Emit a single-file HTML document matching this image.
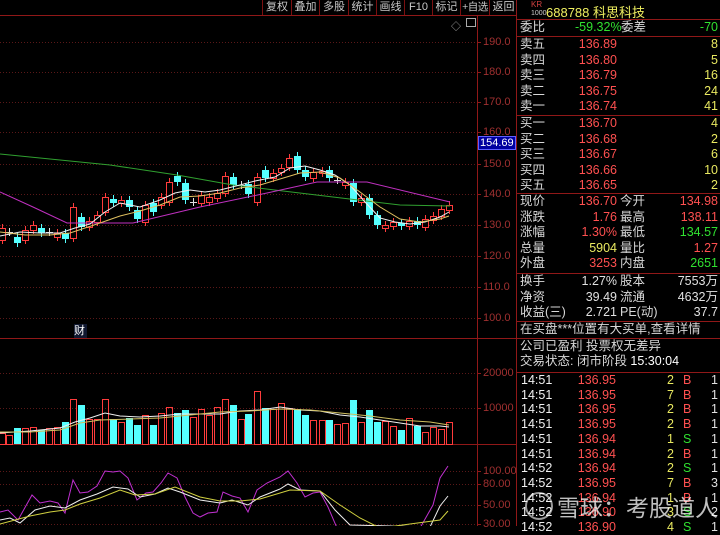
<!DOCTYPE html>
<html><head><meta charset="utf-8"><style>
*{margin:0;padding:0;box-sizing:border-box}
body{width:720px;height:526px;background:#000;overflow:hidden;position:relative;font-family:"Liberation Sans","Noto Sans CJK SC",sans-serif;color:#c8c8c8}
.a{position:absolute;white-space:nowrap}
.tb{position:absolute;top:0;height:15px;font-size:11px;line-height:14px;color:#c8c8c8;text-align:center;border-left:1px solid #7a1010;white-space:nowrap;overflow:hidden}
.ax{position:absolute;left:483px;font-size:11px;color:#a03030;line-height:12px}
.r{position:absolute;font-size:12.5px;line-height:15px;white-space:nowrap}
.l{left:520px;color:#d8d8d8}
.red{color:#ff5050}.grn{color:#30e030}.yel{color:#e8e860}.wh{color:#e0e0e0}
.sep{position:absolute;left:517px;width:203px;height:1px;background:#901818}
</style></head><body>
<svg id="c" width="720" height="526" style="position:absolute;left:0;top:0"></svg>

<div class="tb" style="left:262px;width:29px">复权</div>
<div class="tb" style="left:291px;width:28px">叠加</div>
<div class="tb" style="left:319px;width:29px">多股</div>
<div class="tb" style="left:348px;width:28px">统计</div>
<div class="tb" style="left:376px;width:28px">画线</div>
<div class="tb" style="left:404px;width:28px">F10</div>
<div class="tb" style="left:432px;width:28px">标记</div>
<div class="tb" style="left:460px;width:29px;font-size:10.5px;letter-spacing:-0.5px">+自选</div>
<div class="tb" style="left:489px;width:28px">返回</div>
<div class="a" style="left:451px;top:18px;font-size:10px;color:#aaa">◇</div>
<div class="a" style="left:466px;top:18px;width:10px;height:9px;border:1px solid #aaa"></div>

<div class="ax" style="top:36px">190.0</div>
<div class="ax" style="top:66px">180.0</div>
<div class="ax" style="top:96px">170.0</div>
<div class="ax" style="top:126px">160.0</div>
<div class="ax" style="top:158px">150.0</div>
<div class="ax" style="top:188px">140.0</div>
<div class="ax" style="top:219px">130.0</div>
<div class="ax" style="top:250px">120.0</div>
<div class="ax" style="top:281px">110.0</div>
<div class="ax" style="top:312px">100.0</div>
<div class="ax" style="top:367px">20000</div>
<div class="ax" style="top:402px">10000</div>
<div class="ax" style="top:465px">100.00</div>
<div class="ax" style="top:478px">80.00</div>
<div class="ax" style="top:499px">50.00</div>
<div class="ax" style="top:518px">30.00</div>
<div class="a" style="left:478px;top:136px;width:38px;height:14px;background:#0000a0;border:1px solid #6060ff;color:#fff;font-size:11px;line-height:12px;padding-left:1px">154.69</div>
<div class="a" style="left:74px;top:324px;width:13px;height:14px;background:#101830;color:#fff;font-size:11px;line-height:14px">财</div>

<div class="a" style="left:531px;top:1px;font-size:8px;line-height:8px;color:#d04040">KR<br><span style="font-size:7px;color:#ccc">1000</span></div>
<div class="a" style="left:546px;top:2px;font-size:13px;color:#f0f060">688788 科思科技</div>
<div class="sep" style="top:19px"></div>
<div class="r l" style="top:20px">委比</div><div class="r grn" style="left:575px;top:20px">-59.32%</div><div class="r l" style="left:621px;top:20px">委差</div><div class="r grn" style="right:2px;top:20px">-70</div>
<div class="sep" style="top:36px"></div>
<div id="rows"></div>
<div class="a" style="left:525px;top:492px;width:28px;height:28px;border:2px solid rgba(255,255,255,.6);border-radius:50%"></div>
<div class="a" style="left:557px;top:489px;font-size:23px;color:rgba(255,255,255,.75)">雪球：考股道人</div>
<script>
var s=document.getElementById('c'),h='';
function L(x1,y1,x2,y2,c,d){h+='<line x1="'+x1+'" y1="'+y1+'" x2="'+x2+'" y2="'+y2+'" stroke="'+c+'" stroke-width="1"'+(d?' stroke-dasharray="1,2"':'')+'/>';}
function P(pts,c){h+='<polyline fill="none" stroke="'+c+'" stroke-width="1" points="'+pts+'"/>';}
L(0,15.5,517,15.5,'#901818');L(477.5,16,477.5,526,'#901818');L(516.5,0,516.5,526,'#901818');
L(0,338.5,517,338.5,'#901818');L(0,444.5,517,444.5,'#901818');
[42,72,102,132,164,194,225,256,287,318,373,408,471,484,505,524].forEach(function(y){L(0,y+.5,475,y+.5,'#5a1818',1);L(477,y+.5,481,y+.5,'#901818');});
var C=[[2,228,240,1],[9,232,232,2],[17,237,243,0],[25,230,240,1],[33,225,230,1],[41,228,233,0],[49,232,232,2],[57,233,237,1],[65,233,239,0],[73,207,238,1],[81,217,227,0],[89,221,227,1],[97,215,222,1],[105,197,212,1],[113,199,203,0],[121,200,203,1],[129,200,207,0],[137,210,219,0],[145,205,222,1],[153,203,212,0],[161,197,205,1],[169,182,202,1],[177,176,182,0],[185,183,200,0],[193,202,202,2],[201,195,203,1],[209,197,202,1],[217,193,198,1],[225,176,193,1],[233,177,185,0],[241,185,185,2],[248,184,194,0],[257,177,202,1],[265,170,178,0],[273,173,178,1],[281,168,172,1],[289,158,167,1],[297,156,170,0],[305,170,177,0],[313,172,178,1],[322,171,173,1],[329,170,178,0],[337,180,180,2],[345,182,185,1],[353,183,202,0],[361,198,202,1],[369,198,215,0],[377,215,225,0],[385,225,228,1],[393,222,226,1],[401,223,226,0],[409,221,226,1],[417,221,225,0],[425,219,227,1],[433,216,220,1],[441,209,216,1],[449,205,210,1]];
var V=[11,9,16,16,17,14,16,17,22,45,39,25,25,45,25,22,26,19,29,19,31,37,31,34,27,35,29,37,45,39,25,30,53,36,35,41,36,35,29,24,24,24,20,21,44,22,34,22,23,18,14,26,18,12,17,15,22];
C.forEach(function(k,i){var x=k[0],c=k[3]==1?'#ff3c3c':k[3]==0?'#55ffff':'#e0e0e0';
L(x+.5,k[1]-4,x+.5,k[2]+4,c);
if(k[3]==2){L(x-3,k[1]+.5,x+4,k[1]+.5,c);}
else if(k[3]==1)h+='<rect x="'+(x-2.5)+'" y="'+(k[1]+.5)+'" width="6" height="'+Math.max(1,k[2]-k[1])+'" fill="#000" stroke="'+c+'"/>';
else h+='<rect x="'+(x-3)+'" y="'+k[1]+'" width="7" height="'+Math.max(1,k[2]-k[1])+'" fill="'+c+'"/>';
var v=V[i]||10;
if(k[3]==0)h+='<rect x="'+(x-3)+'" y="'+(444-v)+'" width="7" height="'+v+'" fill="#55ffff"/>';
else h+='<rect x="'+(x-2.5)+'" y="'+(444.5-v)+'" width="6" height="'+v+'" fill="none" stroke="#ff3c3c"/>';
});
P('0,154 110,165 177,175 233,185 333,197 400,205 450,206','#30a030');
P('0,192 33,207 67,223 133,223 200,207 267,193 317,182 367,182 450,202','#c030c0');
P('0,236 20,232 40,233 60,233 75,228 90,224 105,212 120,203 140,207 160,200 175,193 190,190 205,192 220,190 240,185 255,181 275,177 290,168 305,166 320,170 335,175 350,185 365,202 380,218 395,222 410,224 425,222 440,217 449,212','#f0f0f0');
P('0,232 25,235 50,235 70,233 85,228 100,223 120,216 140,211 160,205 180,197 200,196 220,193 240,188 260,185 280,179 300,173 320,172 340,178 360,192 380,207 400,219 420,222 440,219 449,216','#e0c060');
P('0,433 30,431 60,428 75,422 90,418 105,413 120,416 140,417 160,416 180,414 200,414 220,414 240,411 260,410 280,407 300,410 320,411 340,415 360,417 380,420 400,423 420,426 440,426 449,427','#f0f0f0');
P('0,432 30,432 60,430 80,423 100,420 130,419 160,418 190,415 220,412 250,411 280,409 310,410 340,413 370,416 400,420 430,422 449,425','#d0c060');
P('0,512 8,510 18,520 32,495 40,503 50,501 58,503 65,513 73,480 80,493 88,492 97,486 105,471 113,472 120,471 128,478 137,500 146,493 153,492 161,483 168,473 177,478 185,497 193,513 200,517 208,513 217,512 223,492 232,496 240,498 248,512 257,490 267,483 280,477 288,471 297,483 305,497 313,493 320,492 328,507 337,528 420,528 433,505 440,478 448,466','#c030d0');
P('0,520 10,518 20,523 35,510 50,506 65,508 80,500 97,494 113,487 128,489 140,497 155,494 168,488 180,492 200,500 220,503 232,500 248,505 260,497 280,489 288,484 300,490 320,491 335,510 350,525 430,527 440,506 448,496','#f0f0f0');
P('0,524 30,516 50,512 65,510 80,504 100,498 120,490 135,495 155,494 175,487 200,497 220,501 240,501 260,499 290,490 320,491 340,505 360,518 380,528 440,520 448,511','#d0d040');
s.innerHTML=h;
var R='',sell=[['卖五','136.89','8'],['卖四','136.80','5'],['卖三','136.79','16'],['卖二','136.75','24'],['卖一','136.74','41']],buy=[['买一','136.70','4'],['买二','136.68','2'],['买三','136.67','6'],['买四','136.66','10'],['买五','136.65','2']];
function row(y,a,b,bc,c,d,dc){R+='<div class="r l" style="top:'+y+'px">'+a+'</div><div class="r '+bc+'" style="right:103px;top:'+y+'px">'+b+'</div>';
if(c)R+='<div class="r l" style="left:620px;top:'+y+'px">'+c+'</div>';if(d)R+='<div class="r '+dc+'" style="right:2px;top:'+y+'px">'+d+'</div>';}
function sep(y){R+='<div class="sep" style="top:'+y+'px"></div>';}
sell.forEach(function(r,i){row(37+i*15.5,r[0],r[1],'red',0,r[2],'yel')});sep(115);
buy.forEach(function(r,i){row(116+i*15.5,r[0],r[1],'red',0,r[2],'yel')});sep(193);
var q=[['现价','136.70','red','今开','134.98','red'],['涨跌','1.76','red','最高','138.11','red'],['涨幅','1.30%','red','最低','134.57','grn'],['总量','5904','yel','量比','1.27','red'],['外盘','3253','red','内盘','2651','grn']];
q.forEach(function(r,i){row(194+i*15.5,r[0],r[1],r[2],r[3],r[4],r[5])});sep(273);
var w=[['换手','1.27%','股本','7553万'],['净资','39.49','流通','4632万'],['收益(三)','2.721','PE(动)','37.7']];
w.forEach(function(r,i){row(274+i*15.5,r[0],r[1],'wh',r[2],r[3],'wh')});sep(321);
R+='<div class="r l" style="top:322px">在买盘***位置有大买单,查看详情</div>';sep(338);
R+='<div class="r l" style="top:339px">公司已盈利 投票权无差异</div><div class="r l" style="top:354px">交易状态: 闭市阶段 <span style="color:#fff">15:30:04</span></div>';sep(372);
var t=[['14:51','136.95','2','B','1'],['14:51','136.95','7','B','1'],['14:51','136.95','2','B','1'],['14:51','136.95','2','B','1'],['14:51','136.94','1','S','1'],['14:51','136.94','2','B','1'],['14:52','136.94','2','S','1'],['14:52','136.95','7','B','3'],['14:52','136.94','1','B','1'],['14:52','136.90','3','S','2'],['14:52','136.90','4','S','1']];
t.forEach(function(r,i){var y=373+i*14.7;R+='<div class="r" style="left:521px;top:'+y+'px;color:#f0f0f0">'+r[0]+'</div><div class="r red" style="right:104px;top:'+y+'px">'+r[1]+'</div><div class="r yel" style="right:46px;top:'+y+'px">'+r[2]+'</div><div class="r '+(r[3]=='B'?'red':'grn')+'" style="left:683px;top:'+y+'px">'+r[3]+'</div><div class="r wh" style="right:2px;top:'+y+'px">'+r[4]+'</div>';});
document.getElementById('rows').innerHTML=R;
</script>
</body></html>
